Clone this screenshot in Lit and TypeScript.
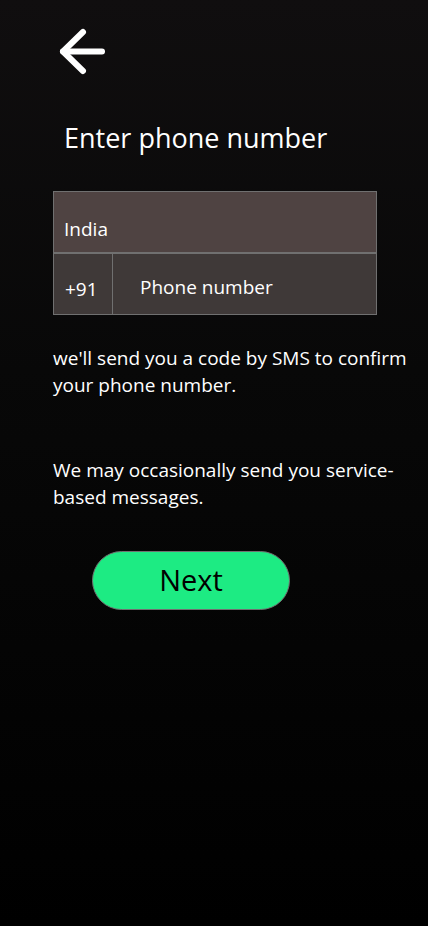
import { LitElement, html, css } from "lit";
import { customElement, state } from "lit/decorators.js";

@customElement("app-root")
export class AppRoot extends LitElement {
  @state() private phone = "";

  static styles = css`
    :host {
      display: block;
      min-height: 100vh;
      box-sizing: border-box;
      padding: 24px 0 48px 53px;
      background: linear-gradient(#100e0f, #080808 40%, #000);
      color: #fff;
      font-family: "Segoe UI", "Open Sans", "Noto Sans", sans-serif;
      font-size: 19px;
      line-height: 27px;
    }
    .back {
      display: block;
      margin-left: 4px;
      padding: 0;
      border: 0;
      background: none;
      color: #fff;
      cursor: pointer;
    }
    .back svg {
      display: block;
    }
    .title {
      margin: 40px 12px 0 11px;
      font-size: 27px;
      font-weight: 400;
      line-height: 40px;
    }
    .fields {
      margin: 33px 51px 0 0;
      border: 1px solid #707070;
      background: #3f3938;
    }
    .country,
    .number {
      box-sizing: border-box;
      width: 100%;
      margin: 0;
      border: 0;
      border-radius: 0;
      outline: 0;
      color: #fff;
      font: inherit;
      appearance: none;
    }
    .country {
      display: block;
      height: 62px;
      padding: 14px 10px 0;
      border-bottom: 2px solid #707070;
      background: #4f4342;
    }
    .row {
      display: flex;
      height: 60px;
    }
    .code {
      flex: none;
      box-sizing: border-box;
      width: 58px;
      padding: 22px 0 0 11px;
    }
    .number {
      flex: 1;
      min-width: 0;
      padding: 6px 10px 0 27px;
      border-left: 1px solid #707070;
      background: none;
    }
    .number::placeholder {
      color: #fff;
      opacity: 1;
    }
    .note {
      max-width: 363px;
      margin: 30px 12px 0 0;
    }
    .note + .note {
      margin-top: 58px;
    }
    .next {
      display: block;
      width: 198px;
      height: 59px;
      margin: 40px 0 0 39px;
      padding: 0 0 2px;
      border: 1px solid #707070;
      border-radius: 30px;
      background: #1deb83;
      color: #000;
      font: inherit;
      font-size: 29px;
      cursor: pointer;
    }
  `;

  private onInput(e: Event) {
    this.phone = (e.target as HTMLInputElement).value;
  }

  render() {
    return html`
      <button class="back" type="button" aria-label="Back">
        <svg width="54" height="54" viewBox="0 0 54 54" fill="none" stroke="currentColor"
          stroke-width="6" stroke-linecap="round" stroke-linejoin="round">
          <path d="M26 8 6 27.500 26 47" />
          <path d="M6 27.500H45" />
        </svg>
      </button>
      <h1 class="title">Enter phone number</h1>
      <form @submit=${(e: Event) => e.preventDefault()}>
        <div class="fields">
          <select class="country" aria-label="Country">
            <option>India</option>
          </select>
          <div class="row">
            <label class="code" for="phone">+91</label>
            <input class="number" id="phone" type="tel" placeholder="Phone number"
              .value=${this.phone} @input=${this.onInput} />
          </div>
        </div>
        <p class="note">we'll send you a code by SMS to confirm your phone number.</p>
        <p class="note">We may occasionally send you service-based messages.</p>
        <button class="next" type="submit">Next</button>
      </form>
    `;
  }
}
